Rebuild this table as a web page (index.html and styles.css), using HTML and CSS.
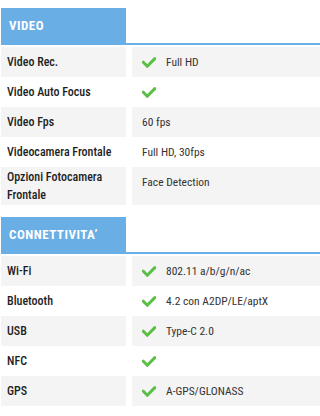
FILE: index.html
```html
<!DOCTYPE html>
<html lang="it">
<head>
<meta charset="utf-8">
<link rel="stylesheet" href="styles.css">
</head>
<body>
<section class="spec">
  <div class="spec-head"><h2 class="spec-tab">VIDEO</h2></div>
  <div class="spec-row shaded"><div class="label">Video Rec.</div><div class="value"><svg class="check" viewBox="0 0 14 11"><polyline points="1.3,5.2 5.3,9.2 12.8,1.6"/></svg>Full HD</div></div>
  <div class="spec-row"><div class="label">Video Auto Focus</div><div class="value"><svg class="check" viewBox="0 0 14 11"><polyline points="1.3,5.2 5.3,9.2 12.8,1.6"/></svg></div></div>
  <div class="spec-row shaded"><div class="label">Video Fps</div><div class="value">60 fps</div></div>
  <div class="spec-row"><div class="label">Videocamera Frontale</div><div class="value">Full HD, 30fps</div></div>
  <div class="spec-row shaded"><div class="label">Opzioni Fotocamera Frontale</div><div class="value">Face Detection</div></div>
</section>
<section class="spec">
  <div class="spec-head"><h2 class="spec-tab">CONNETTIVITA’</h2></div>
  <div class="spec-row shaded"><div class="label">Wi-Fi</div><div class="value"><svg class="check" viewBox="0 0 14 11"><polyline points="1.3,5.2 5.3,9.2 12.8,1.6"/></svg>802.11 a/b/g/n/ac</div></div>
  <div class="spec-row"><div class="label">Bluetooth</div><div class="value"><svg class="check" viewBox="0 0 14 11"><polyline points="1.3,5.2 5.3,9.2 12.8,1.6"/></svg>4.2 con A2DP/LE/aptX</div></div>
  <div class="spec-row shaded"><div class="label">USB</div><div class="value"><svg class="check" viewBox="0 0 14 11"><polyline points="1.3,5.2 5.3,9.2 12.8,1.6"/></svg>Type-C 2.0</div></div>
  <div class="spec-row"><div class="label">NFC</div><div class="value"><svg class="check" viewBox="0 0 14 11"><polyline points="1.3,5.2 5.3,9.2 12.8,1.6"/></svg></div></div>
  <div class="spec-row shaded"><div class="label">GPS</div><div class="value"><svg class="check" viewBox="0 0 14 11"><polyline points="1.3,5.2 5.3,9.2 12.8,1.6"/></svg>A-GPS/GLONASS</div></div>
</section>
</body>
</html>
```
FILE: styles.css
```css
html, body {
  margin: 0;
  padding: 0;
  background: #ffffff;
}
body {
  font-family: Roboto, "Liberation Sans", sans-serif;
  font-stretch: 75%;
  color: #222222;
  font-size: 12px;
  padding: 8px 0 0 1px;
  overflow: hidden;
}
.spec + .spec {
  margin-top: 12px;
}
.spec-head {
  border-bottom: 2px solid #6aaee6;
  margin-bottom: 2px;
}
.spec-tab {
  margin: 0;
  width: 125px;
  height: 35px;
  box-sizing: border-box;
  background: #6aaee6;
  color: #ffffff;
  font-size: 13px;
  font-weight: 700;
  letter-spacing: 0.5px;
  line-height: 36px;
  padding-left: 8px;
}
.spec-row {
  display: grid;
  grid-template-columns: 125px 1fr;
  column-gap: 6px;
  min-height: 30px;
}
.label, .value {
  box-sizing: border-box;
  line-height: 18px;
}
.label {
  display: flex;
  align-items: center;
  padding: 1px 6px;
  font-weight: 500;
  color: #1e1e1e;
}
.value {
  display: flex;
  align-items: flex-start;
  padding: 6px 10px 0;
  font-size: 11.5px;
  color: #333333;
}
.shaded .label, .shaded .value {
  background: #f4f4f4;
}
.check {
  width: 14px;
  height: 11px;
  margin: 4px 10px 0 0;
  flex: none;
}
.check polyline {
  fill: none;
  stroke: #5bbf46;
  stroke-width: 3;
  stroke-linecap: round;
  stroke-linejoin: miter;
}
```
